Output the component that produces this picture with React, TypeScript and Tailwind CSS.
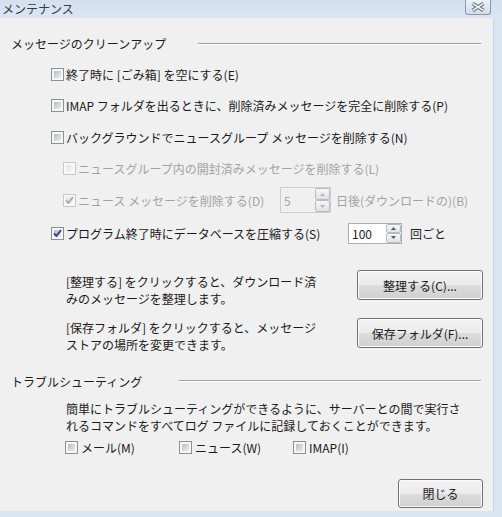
import React from 'react';

interface CheckBoxProps {
  checked?: boolean;
  disabled?: boolean;
}

function CheckBox({ checked = false, disabled = false }: CheckBoxProps) {
  return (
    <span
      className={`relative flex h-[13px] w-[13px] shrink-0 border p-[2px] ${
        disabled ? 'border-[#c9c9c9] bg-[#f8f8f8]' : 'border-[#8e8f8f] bg-[#f6f6f6]'
      }`}
    >
      <span
        className={`h-full w-full ${
          disabled
            ? 'bg-linear-to-br from-[#e4e4e4] to-[#f7f7f7]'
            : 'bg-linear-to-br from-[#b9bdc2] to-[#ececec]'
        }`}
      />
      {checked && (
        <svg className="absolute left-[-1px] top-[-1px]" width="13" height="13" viewBox="0 0 13 13">
          <path
            d="M3 6.3 L5.4 8.9 L10 3.2"
            fill="none"
            stroke={disabled ? '#a9a9a9' : '#2c4585'}
            strokeWidth="1.9"
          />
        </svg>
      )}
    </span>
  );
}

function SpinButton({ up, disabled }: { up?: boolean; disabled?: boolean }) {
  return (
    <span className="flex flex-1 items-center justify-center rounded-[2px] border border-[#b6bac1] bg-linear-to-b from-[#f7f7f7] to-[#dfe2e6]">
      <svg width="5" height="3" viewBox="0 0 5 3">
        <path d={up ? 'M0 3 L2.5 0 L5 3 Z' : 'M0 0 L5 0 L2.5 3 Z'} fill={disabled ? '#b4b4b4' : '#4a5a73'} />
      </svg>
    </span>
  );
}

interface SpinBoxProps {
  value: string;
  disabled?: boolean;
  className: string;
}

function SpinBox({ value, disabled = false, className }: SpinBoxProps) {
  return (
    <div
      className={`flex shrink-0 border ${
        disabled ? 'border-[#cdcdcd] bg-[#f0f0f0] text-[#a3a3a3]' : 'border-[#abadb3] bg-white text-[#1a1a1a]'
      } ${className}`}
    >
      <span className="flex-1 self-center pl-[3px]">{value}</span>
      <div className="flex w-[15px] flex-col">
        <SpinButton up disabled={disabled} />
        <SpinButton disabled={disabled} />
      </div>
    </div>
  );
}

function Button({ children, className }: { children: React.ReactNode; className: string }) {
  return (
    <div
      className={`flex shrink-0 items-center justify-center rounded-[3px] border border-[#707070] bg-[linear-gradient(#f3f3f3,#ebebeb_50%,#dddddd_50%,#d0d0d0)] shadow-[inset_0_0_0_1px_#fbfbfb] ${className}`}
    >
      {children}
    </div>
  );
}

function GroupHeader({ title, lineWidth }: { title: string; lineWidth: string }) {
  return (
    <div className="flex h-[17px] items-center">
      <span className="pl-[11px]">{title}</span>
      <div className={`ml-auto mr-[12px] h-[2px] border-t border-b border-t-[#a0a0a0] border-b-white ${lineWidth}`} />
    </div>
  );
}

export default function App() {
  return (
    <div className="flex h-[517px] w-[502px] flex-col overflow-hidden bg-[#dae5f2] font-['Noto_Sans_CJK_JP',sans-serif] text-[12px] leading-[17px] text-[#1a1a1a]">
      {/* Title bar */}
      <div className="flex h-[18px] shrink-0 items-start justify-between bg-linear-to-b from-[#d3e0f0] to-[#dce6f3]">
        <span className="ml-[2px] leading-[17px] text-[#3a3a3a]">メンテナンス</span>
        <div className="mr-[11px] flex h-[15px] w-[26px] items-center justify-center rounded-b-[3px] border border-t-0 border-[#8a97ab] bg-linear-to-b from-[#eef2f8] to-[#d2dbe9]">
          <svg width="24" height="14" viewBox="0 0 24 14">
            <path d="M6.5 3.5 L17.5 10.5 M17.5 3.5 L6.5 10.5" stroke="#56606e" strokeWidth="3.6" />
            <path d="M6.5 3.5 L17.5 10.5 M17.5 3.5 L6.5 10.5" stroke="#f4f4f4" strokeWidth="1.5" />
          </svg>
        </div>
      </div>

      <div className="flex h-[493px] shrink-0">
        {/* Dialog body */}
        <div className="flex w-[494px] flex-col border-r border-[#c9d5e4] bg-[#f0f0f0]">
          <div className="mt-[17px]">
            <GroupHeader title="メッセージのクリーンアップ" lineWidth="w-[283px]" />
          </div>

          <div className="mt-[6.5px] flex h-[31.5px] items-center pl-[51px]">
            <CheckBox />
            <span className="ml-[2px]">終了時に [ごみ箱] を空にする(E)</span>
          </div>
          <div className="flex h-[31.5px] items-center pl-[51px]">
            <CheckBox />
            <span className="ml-[2px]">IMAP フォルダを出るときに、削除済みメッセージを完全に削除する(P)</span>
          </div>
          <div className="flex h-[31.5px] items-center pl-[51px]">
            <CheckBox />
            <span className="ml-[2px]">バックグラウンドでニュースグループ メッセージを削除する(N)</span>
          </div>
          <div className="flex h-[31.5px] items-center pl-[63px] text-[#a3a3a3]">
            <CheckBox disabled />
            <span className="ml-[2px]">ニュースグループ内の開封済みメッセージを削除する(L)</span>
          </div>
          <div className="flex h-[31.5px] items-center pl-[63px] text-[#a3a3a3]">
            <CheckBox checked disabled />
            <span className="ml-[2px] w-[202px]">ニュース メッセージを削除する(D)</span>
            <SpinBox value="5" disabled className="h-[26px] w-[51px]" />
            <span className="ml-[5px]">日後(ダウンロードの)(B)</span>
          </div>
          <div className="flex h-[34px] items-center pl-[51px]">
            <CheckBox checked />
            <span className="ml-[2px] w-[282px]">プログラム終了時にデータベースを圧縮する(S)</span>
            <SpinBox value="100" className="h-[21px] w-[54px]" />
            <span className="ml-[8px]">回ごと</span>
          </div>

          <div className="mt-[20px] flex items-start justify-between pl-[66px] pr-[10px]">
            <p className="pt-[2.5px]">
              [整理する] をクリックすると、ダウンロード済
              <br />
              みのメッセージを整理します。
            </p>
            <Button className="h-[30px] w-[126px]">整理する(C)...</Button>
          </div>
          <div className="mt-[11.5px] flex items-start justify-between pl-[66px] pr-[10px]">
            <p className="pt-[0.5px]">
              [保存フォルダ] をクリックすると、メッセージ
              <br />
              ストアの場所を変更できます。
            </p>
            <Button className="h-[30px] w-[126px]">保存フォルダ(F)...</Button>
          </div>

          <div className="mt-[20px]">
            <GroupHeader title="トラブルシューティング" lineWidth="w-[302px]" />
          </div>
          <p className="mt-[10px] pl-[66px]">
            簡単にトラブルシューティングができるように、サーバーとの間で実行さ
            <br />
            れるコマンドをすべてログ ファイルに記録しておくことができます。
          </p>
          <div className="mt-[5.5px] flex h-[17px] items-center pl-[65px]">
            <div className="flex w-[114px] items-center">
              <CheckBox />
              <span className="ml-[3px]">メール(M)</span>
            </div>
            <div className="flex w-[114px] items-center">
              <CheckBox />
              <span className="ml-[3px]">ニュース(W)</span>
            </div>
            <div className="flex items-center">
              <CheckBox />
              <span className="ml-[3px]">IMAP(I)</span>
            </div>
          </div>

          <div className="mt-[23px] flex justify-end pr-[10px]">
            <Button className="h-[29px] w-[85px]">閉じる</Button>
          </div>
        </div>
        <div className="flex-1" />
      </div>
      <div className="flex-1" />
    </div>
  );
}
